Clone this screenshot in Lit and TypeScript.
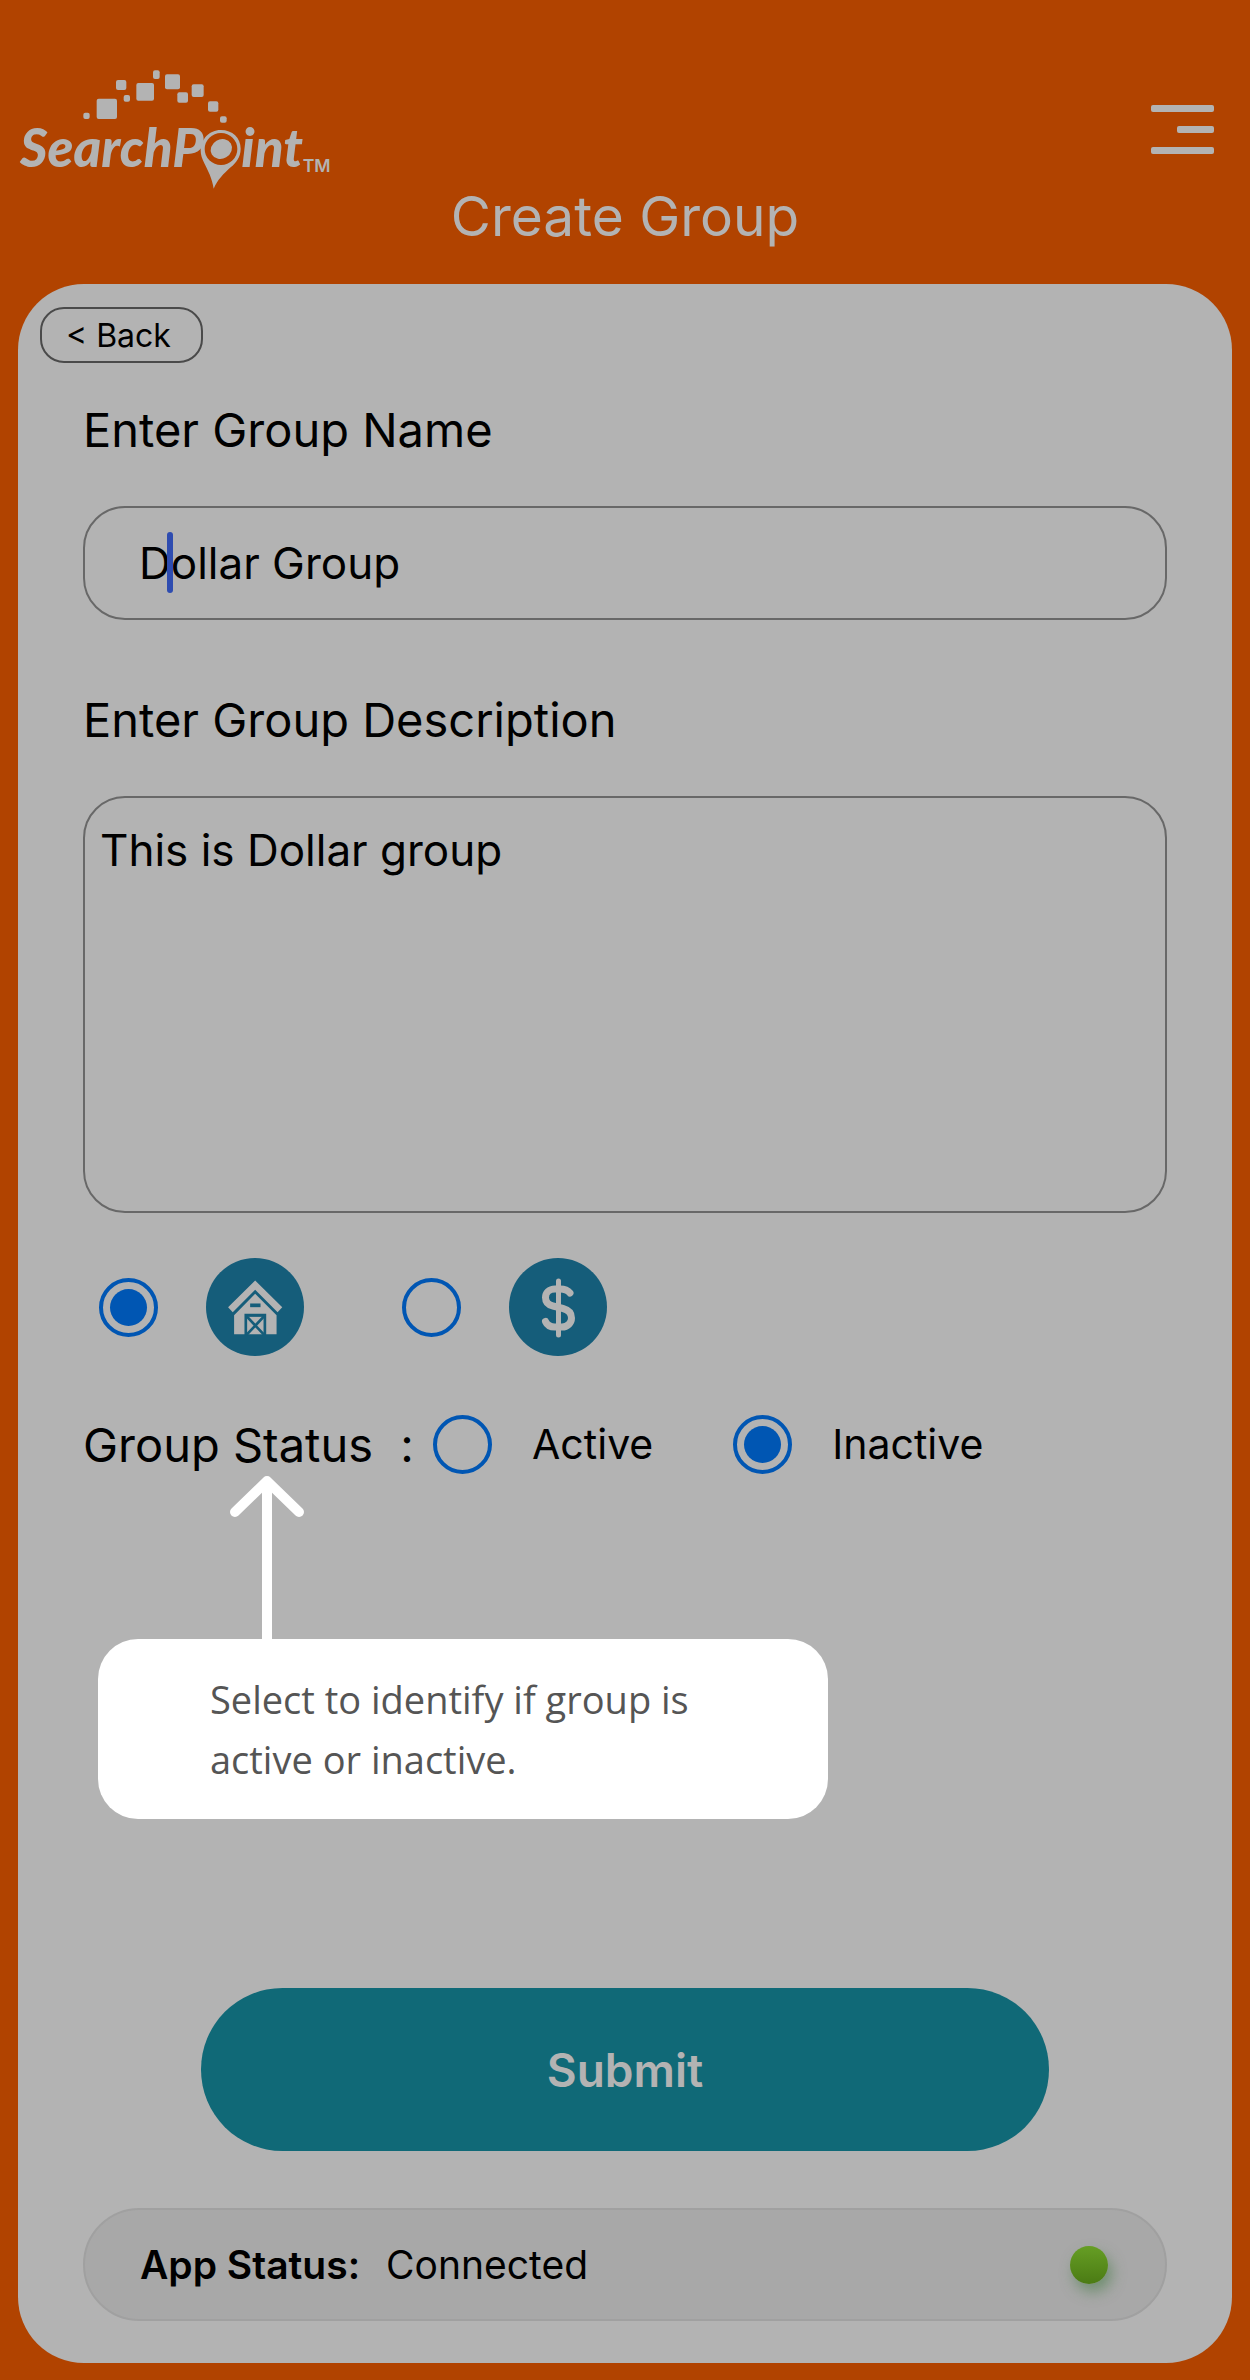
import { LitElement, html, css, svg } from "lit";
import { customElement, property, state } from "lit/decorators.js";

/** Scattered squares above the wordmark: x, y, width, height. */
const SPARKS: [number, number, number, number][] = [
  [250, 188, 19, 19],
  [290, 146, 61, 61],
  [348, 90, 31, 30],
  [371, 135, 19, 20],
  [409, 99, 53, 53],
  [459, 61, 20, 26],
  [495, 73, 45, 45],
  [532, 127, 32, 31],
  [575, 103, 36, 38],
  [624, 154, 31, 31],
  [660, 199, 20, 19],
];

@customElement("brand-logo")
export class BrandLogo extends LitElement {
  static styles = css`
    :host {
      display: block;
    }
    .logo {
      display: block;
      width: 350px;
      height: 150px;
      fill: #b3b3b3;
    }
    .word {
      font: italic 900 159px Lato, "Open Sans", sans-serif;
    }
    .mark {
      font: 600 53px Inter, sans-serif;
    }
    .hole {
      fill: #b14300;
    }
  `;

  render() {
    return html`
      <svg class="logo" viewBox="0 0 1050 450" role="img" aria-label="SearchPoint">
        ${SPARKS.map(
          ([x, y, w, h]) => svg`<rect x=${x} y=${y} width=${w} height=${h} rx="6" />`
        )}
        <text class="word" x="60" y="352">SearchP</text>
        <path d="M662 240C698 240 722 264 722 296C722 322 708 338 692 352C672 370 652 390 641 416C636 384 624 362 614 342C606 326 602 314 602 302C602 268 628 240 662 240Z" />
        <ellipse class="hole" cx="663" cy="297" rx="49" ry="48" />
        <ellipse cx="664" cy="297" rx="33" ry="29" transform="rotate(-30 664 297)" />
        <text class="word" x="724" y="352">int</text>
        <text class="mark" x="908" y="366">TM</text>
      </svg>
    `;
  }
}

@customElement("group-icon")
export class GroupIcon extends LitElement {
  @property() name: "barn" | "dollar" = "barn";

  static styles = css`
    :host {
      display: block;
    }
    .icon {
      display: block;
      width: 98px;
      height: 98px;
    }
    .disc,
    .cut {
      fill: #155d7a;
    }
    .shape {
      fill: #b3b3b3;
    }
    .cross {
      fill: none;
      stroke: #155d7a;
      stroke-width: 8;
    }
    .stroke {
      fill: none;
      stroke: #b3b3b3;
      stroke-width: 7;
      stroke-linecap: round;
      stroke-linejoin: round;
    }
    .bar {
      stroke: #b3b3b3;
      stroke-width: 5;
      stroke-linecap: round;
    }
  `;

  render() {
    return this.name === "barn"
      ? html`<svg class="icon" viewBox="0 0 293 293" role="img" aria-label="Barn">
          <circle class="disc" cx="146.5" cy="146.5" r="146.5" />
          <path class="shape" d="M147 67L228 147L214 162L147 95L80 162L66 147Z" />
          <path class="shape" d="M147 107L211 171V228H180V167H115V228H84V171Z" />
          <rect class="cut" x="132" y="136" width="31" height="11" />
          <rect class="shape" x="123" y="176" width="49" height="52" />
          <path class="cross" d="M121 174L174 230M174 174L121 230" />
        </svg>`
      : html`<svg class="icon" viewBox="0 0 98 98" role="img" aria-label="Dollar">
          <circle class="disc" cx="49" cy="49" r="49" />
          <path
            class="stroke"
            d="M61 35C59 32.500 55 31 51 31H46C40 31 36.500 35 36.500 39.500C36.500 44.500 39.500 47 44 48L54 50.500C59.500 52 62.500 55 62.500 60C62.500 65 58.500 69 53 69H46C41 69 38 67 36.500 63.500"
          />
          <path class="bar" d="M49.500 23V77" />
        </svg>`;
  }
}

@customElement("app-root")
export class AppRoot extends LitElement {
  @state() private icon = "barn";
  @state() private status = "inactive";

  static styles = css`
    :host {
      display: block;
      background: #b14300;
      font-family: Inter, "Liberation Sans", sans-serif;
      color: #000;
    }
    *,
    *::before {
      box-sizing: border-box;
    }
    .page {
      display: flex;
      flex-direction: column;
      padding: 50px 18px 17px;
    }
    .bar {
      display: flex;
      justify-content: space-between;
      align-items: flex-start;
      height: 132px;
      margin: 0 -18px;
    }
    .menu {
      display: flex;
      flex-direction: column;
      align-items: flex-end;
      gap: 14px;
      width: 63px;
      margin: 55px 36px 0 0;
      padding: 0;
      border: 0;
      background: none;
    }
    .line {
      width: 100%;
      height: 7px;
      border-radius: 2px;
      background: #b3b3b3;
    }
    .line.short {
      width: 37px;
    }
    .title {
      margin: 0 0 34px;
      font-size: 55px;
      font-weight: 400;
      line-height: 68px;
      text-align: center;
      color: #b3b3b3;
    }
    .card {
      padding: 23px 22px 42px;
      border-radius: 66px;
      background: #b3b3b3;
    }
    .back {
      display: block;
      height: 56px;
      padding: 0 30px 0 24px;
      border: 2px solid #4a4a4a;
      border-radius: 24px;
      background: none;
      font: 32px Inter, sans-serif;
      color: #000;
    }
    .form {
      display: flex;
      flex-direction: column;
      margin: 37px 43px 0;
    }
    .label {
      font-size: 47px;
      line-height: 60px;
    }
    .field {
      position: relative;
      display: flex;
      margin: 46px 0 70px;
    }
    .field.last {
      margin-bottom: 45px;
    }
    .text,
    .area {
      width: 100%;
      border: 2px solid #686868;
      border-radius: 42px;
      outline: 0;
      background: none;
      font: 44px/56px Inter, sans-serif;
      color: #000;
    }
    .text {
      height: 114px;
      padding: 0 54px;
    }
    .area {
      display: block;
      height: 417px;
      padding: 24px 15px;
      resize: none;
    }
    .caret {
      position: absolute;
      left: 84px;
      top: 26px;
      width: 6px;
      height: 61px;
      border-radius: 3px;
      background: #2e4cb0;
    }
    .options {
      display: flex;
      gap: 98px;
      padding-left: 16px;
    }
    .option {
      display: flex;
      align-items: center;
      gap: 48px;
    }
    .radio {
      appearance: none;
      flex: none;
      display: grid;
      place-items: center;
      width: 59px;
      height: 59px;
      margin: 0;
      border: 4px solid #0056b3;
      border-radius: 50%;
    }
    .radio:checked::before {
      content: "";
      width: 37px;
      height: 37px;
      border-radius: 50%;
      background: #0056b3;
    }
    .status {
      position: relative;
      display: flex;
      align-items: center;
      height: 59px;
      margin: 59px 0 514px;
    }
    .colon {
      width: 60px;
      padding-left: 8px;
      text-align: center;
    }
    .choices {
      display: flex;
      gap: 80px;
    }
    .choice {
      display: flex;
      align-items: center;
      gap: 40px;
      font-size: 41px;
      line-height: 59px;
    }
    .callout {
      position: absolute;
      left: 15px;
      top: 60px;
      width: 730px;
    }
    .arrow {
      display: block;
      width: 76px;
      height: 164px;
      margin-left: 131px;
      fill: none;
      stroke: #fff;
      stroke-width: 10;
      stroke-linecap: round;
      stroke-linejoin: round;
    }
    .hint {
      margin: 0;
      padding: 30px 112px;
      border-radius: 40px;
      background: #fff;
      font: 38px/60px "Open Sans", sans-serif;
      color: #555;
    }
    .submit {
      height: 163px;
      margin: 0 118px 57px;
      border: 0;
      border-radius: 82px;
      background: #106977;
      font: 600 46px Inter, sans-serif;
      color: #b3b3b3;
    }
    .app-status {
      display: flex;
      align-items: center;
      gap: 26px;
      height: 113px;
      padding: 0 57px 0 55px;
      border: 2px solid #a0a0a0;
      border-radius: 57px;
      background: #a8a8a8;
      font-size: 39px;
    }
    .key {
      font-weight: 600;
    }
    .dot {
      width: 38px;
      height: 38px;
      margin-left: auto;
      border-radius: 50%;
      background: linear-gradient(#669e24, #4b7b14);
      box-shadow: 4px 8px 14px rgba(60, 120, 60, 0.5);
    }
  `;

  private iconOption(value: "barn" | "dollar") {
    return html`<label class="option">
      <input
        class="radio"
        type="radio"
        name="icon"
        .checked=${this.icon === value}
        @change=${() => (this.icon = value)}
      />
      <group-icon .name=${value}></group-icon>
    </label>`;
  }

  private statusChoice(value: string, text: string) {
    return html`<label class="choice">
      <input
        class="radio"
        type="radio"
        name="status"
        .checked=${this.status === value}
        @change=${() => (this.status = value)}
      />
      <span>${text}</span>
    </label>`;
  }

  render() {
    return html`
      <div class="page">
        <header>
          <div class="bar">
            <brand-logo></brand-logo>
            <button class="menu" aria-label="Menu">
              <span class="line"></span>
              <span class="line short"></span>
              <span class="line"></span>
            </button>
          </div>
          <h1 class="title">Create Group</h1>
        </header>
        <main class="card">
          <button class="back">&lt; Back</button>
          <form class="form" @submit=${(e: Event) => e.preventDefault()}>
            <label class="label" for="group-name">Enter Group Name</label>
            <div class="field">
              <input class="text" id="group-name" type="text" .value=${"Dollar Group"} />
              <span class="caret"></span>
            </div>
            <label class="label" for="group-description">Enter Group Description</label>
            <div class="field last">
              <textarea class="area" id="group-description" .value=${"This is Dollar group"}></textarea>
            </div>
            <div class="options" role="radiogroup" aria-label="Group icon">
              ${this.iconOption("barn")} ${this.iconOption("dollar")}
            </div>
            <div class="status" role="radiogroup" aria-labelledby="status-label">
              <span class="label" id="status-label">Group Status</span>
              <span class="label colon">:</span>
              <div class="choices">
                ${this.statusChoice("active", "Active")} ${this.statusChoice("inactive", "Inactive")}
              </div>
              <div class="callout" role="tooltip">
                <svg class="arrow" viewBox="0 0 76 164" aria-hidden="true">
                  <path d="M38 170V6M6 37L38 6L70 37" />
                </svg>
                <p class="hint">Select to identify if group is active or inactive.</p>
              </div>
            </div>
            <button class="submit" type="submit">Submit</button>
            <div class="app-status" role="status">
              <span class="key">App Status:</span>
              <span>Connected</span>
              <span class="dot"></span>
            </div>
          </form>
        </main>
      </div>
    `;
  }
}
